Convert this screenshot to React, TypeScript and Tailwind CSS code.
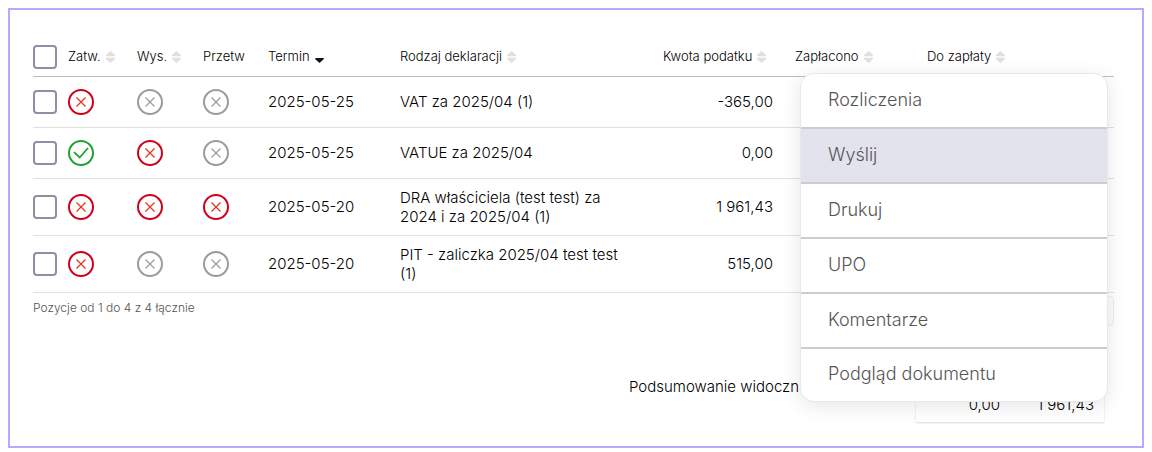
import React from "react";

type Status = "ok" | "error" | "off";

interface Row {
  approved: Status;
  sent: Status;
  processed: Status;
  date: string;
  name: string;
  tax: string;
}

const rows: Row[] = [
  { approved: "error", sent: "off", processed: "off", date: "2025-05-25", name: "VAT za 2025/04 (1)", tax: "-365,00" },
  { approved: "ok", sent: "error", processed: "off", date: "2025-05-25", name: "VATUE za 2025/04", tax: "0,00" },
  { approved: "error", sent: "error", processed: "error", date: "2025-05-20", name: "DRA właściciela (test test) za 2024 i za 2025/04 (1)", tax: "1 961,43" },
  { approved: "error", sent: "off", processed: "off", date: "2025-05-20", name: "PIT - zaliczka 2025/04 test test (1)", tax: "515,00" },
];

const menuItems = ["Rozliczenia", "Wyślij", "Drukuj", "UPO", "Komentarze", "Podgląd dokumentu"];

function StatusIcon({ status }: { status: Status }) {
  if (status === "ok") {
    return (
      <svg viewBox="0 0 26 26" className="block size-[26px]" fill="none" stroke="#1fa22e" role="img" aria-label="Tak">
        <circle cx="13" cy="13" r="12" strokeWidth="2" />
        <path d="M6 12.2l5.7 5.3L20 8" strokeWidth="1.8" />
      </svg>
    );
  }
  const ring = status === "error" ? "#d0021b" : "#9b9b9b";
  const cross = status === "error" ? "#e0321f" : "#9b9b9b";
  return (
    <svg viewBox="0 0 26 26" className="block size-[26px]" fill="none" role="img" aria-label="Nie">
      <circle cx="13" cy="13" r="12" stroke={ring} strokeWidth="2" />
      <path d="M8.5 8.5l9 9M17.5 8.5l-9 9" stroke={cross} strokeWidth="1.2" />
    </svg>
  );
}

function SortIcon() {
  return (
    <svg viewBox="0 0 9 12" className="h-3 w-[9px] shrink-0" fill="#e0e0e0" aria-hidden="true">
      <path d="M4.5 0L9 4v1.3H0V4z" />
      <path d="M4.5 12L9 8V6.7H0V8z" />
    </svg>
  );
}

function SortedIcon() {
  return (
    <svg viewBox="0 0 9 12" className="h-3 w-[9px] shrink-0" fill="#111122" aria-hidden="true">
      <path d="M0.3 7h8.4v1.3L4.5 12 0.3 8.3z" />
    </svg>
  );
}

function Heading({ label, sort = "none" }: { label: string; sort?: "none" | "both" | "down" }) {
  return (
    <th className="p-0 text-left font-light">
      <button type="button" className="flex items-center gap-[5px] whitespace-nowrap">
        {label}
        {sort === "both" && <SortIcon />}
        {sort === "down" && <SortedIcon />}
      </button>
    </th>
  );
}

function Check({ label }: { label: string }) {
  return (
    <input
      type="checkbox"
      aria-label={label}
      className="block size-6 appearance-none rounded border-2 border-[#908ea4] bg-white checked:bg-[#908ea4]"
    />
  );
}

export default function App() {
  return (
    <main className="relative m-2 border-2 border-[#b8a9ff] bg-white pt-7 pr-7 pb-6 pl-[23px] font-['Inter',sans-serif] text-[15px] leading-[19px] font-light text-black">
      <table className="w-full table-fixed border-collapse">
        <colgroup>
          <col className="w-[35px]" />
          <col className="w-[69px]" />
          <col className="w-[66px]" />
          <col className="w-[65px]" />
          <col className="w-[132px]" />
          <col />
          <col className="w-[132px]" />
          <col className="w-[132px]" />
          <col className="w-[187px]" />
        </colgroup>
        <thead>
          <tr className="h-[38px] border-b border-[#bdbdbd] text-[13px]">
            <th className="p-0">
              <Check label="Zaznacz wszystkie" />
            </th>
            <Heading label="Zatw." sort="both" />
            <Heading label="Wys." sort="both" />
            <Heading label="Przetw" />
            <Heading label="Termin" sort="down" />
            <Heading label="Rodzaj deklaracji" sort="both" />
            <Heading label="Kwota podatku" sort="both" />
            <Heading label="Zapłacono" sort="both" />
            <Heading label="Do zapłaty" sort="both" />
          </tr>
        </thead>
        <tbody>
          {rows.map((row) => (
            <tr key={row.name} className="border-b border-[#e0e0e0]">
              <td className="p-0">
                <Check label={row.name} />
              </td>
              <td className="px-0 py-3"><StatusIcon status={row.approved} /></td>
              <td className="p-0"><StatusIcon status={row.sent} /></td>
              <td className="p-0"><StatusIcon status={row.processed} /></td>
              <td className="p-0">{row.date}</td>
              <td className="py-[9px] pr-8 pl-0">{row.name}</td>
              <td className="py-0 pr-[22px] pl-0 text-right">{row.tax}</td>
              <td className="p-0" />
              <td className="p-0" />
            </tr>
          ))}
        </tbody>
      </table>

      <div className="flex items-start justify-between pt-[3px]">
        <p className="pt-1 text-xs text-[#555]">Pozycje od 1 do 4 z 4 łącznie</p>
        <button type="button" aria-label="Następna strona" className="h-[30px] w-8 rounded-sm border border-[#ececec] bg-[#fcfcfc]" />
      </div>

      <section className="mt-[26px] mr-[10px] flex items-center justify-end">
        <p className="w-[287px]">Podsumowanie widoczn</p>
        <table className="w-[188px] table-fixed border-collapse shadow-[0_1px_2px_rgba(0,0,0,0.15)]">
          <tbody>
            <tr className="h-[35px]">
              <td className="p-0" />
              <td className="p-0" />
            </tr>
            <tr className="h-[35px]">
              <td className="py-0 pr-[10px] pl-0 text-right">0,00</td>
              <td className="py-0 pr-[10px] pl-0 text-right">1 961,43</td>
            </tr>
          </tbody>
        </table>
      </section>

      <div
        role="menu"
        className="absolute top-[63px] right-[34px] w-[308px] overflow-hidden rounded-[14px] border border-[#e8e8e8] bg-white text-lg text-[#555] shadow-[0_4px_20px_rgba(0,0,0,0.1)]"
      >
        {menuItems.map((item) => (
          <button
            key={item}
            type="button"
            role="menuitem"
            className={
              item === "Wyślij"
                ? "block h-[55px] w-full border-b-2 border-[#cccbd6] bg-[#e3e3ed] px-[27px] pb-0.5 text-left"
                : "block h-[55px] w-full border-b-2 border-[#cccbd6] px-[27px] pb-0.5 text-left last:h-[52px] last:border-b-0"
            }
          >
            {item}
          </button>
        ))}
      </div>
    </main>
  );
}
